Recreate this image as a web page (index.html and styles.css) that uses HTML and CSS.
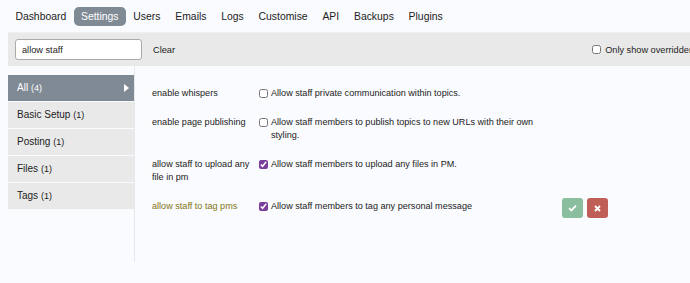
FILE: index.html
```html
<!DOCTYPE html>
<html>
<head>
<meta charset="utf-8">
<link rel="stylesheet" href="styles.css">
</head>
<body>
<div class="page">
  <nav class="nav">
    <a class="nav-item">Dashboard</a>
    <a class="nav-item active">Settings</a>
    <a class="nav-item">Users</a>
    <a class="nav-item">Emails</a>
    <a class="nav-item">Logs</a>
    <a class="nav-item">Customise</a>
    <a class="nav-item">API</a>
    <a class="nav-item">Backups</a>
    <a class="nav-item">Plugins</a>
  </nav>
  <div class="band">
    <input class="search" type="text" value="allow staff">
    <span class="clear">Clear</span>
    <label class="overridden"><input type="checkbox" class="cb"> Only show overridden</label>
  </div>
  <div class="layout">
    <ul class="sidebar">
      <li class="side-item active">All <span class="count">(4)</span><span class="tri"></span></li>
      <li class="side-item">Basic Setup <span class="count">(1)</span></li>
      <li class="side-item">Posting <span class="count">(1)</span></li>
      <li class="side-item">Files <span class="count">(1)</span></li>
      <li class="side-item">Tags <span class="count">(1)</span></li>
    </ul>
    <div class="main">
      <div class="row">
        <div class="label">enable whispers</div>
        <label class="value"><input type="checkbox" class="cb"><span>Allow staff private communication within topics.</span></label>
      </div>
      <div class="row">
        <div class="label">enable page publishing</div>
        <label class="value"><input type="checkbox" class="cb"><span>Allow staff members to publish topics to new URLs with their own styling.</span></label>
      </div>
      <div class="row">
        <div class="label">allow staff to upload any file in pm</div>
        <label class="value"><input type="checkbox" class="cb" checked><span>Allow staff members to upload any files in PM.</span></label>
      </div>
      <div class="row">
        <div class="label dirty">allow staff to tag pms</div>
        <label class="value"><input type="checkbox" class="cb" checked><span>Allow staff members to tag any personal message</span></label>
        <div class="actions">
          <button class="btn ok"><svg width="9" height="8" viewBox="0 0 9 8"><path d="M1 4.2 L3.4 6.4 L8 1.6" fill="none" stroke="#fff" stroke-width="1.8"/></svg></button>
          <button class="btn cancel"><svg width="7" height="7" viewBox="0 0 7 7"><path d="M1 1 L6 6 M6 1 L1 6" fill="none" stroke="#fff" stroke-width="1.8"/></svg></button>
        </div>
      </div>
    </div>
  </div>
</div>
</body>
</html>
```
FILE: styles.css
```css
html, body {
  margin: 0;
  padding: 0;
  background: #fafbfe;
  overflow: hidden;
}
body {
  font-family: "Liberation Sans", Arial, sans-serif;
  color: #222;
}
.page {
  padding-left: 8px;
  width: 730px;
}
.nav {
  display: flex;
  align-items: center;
  height: 33px;
  border-bottom: 1px solid #eef0f3;
  box-sizing: border-box;
}
.nav-item {
  font-size: 10.4px;
  padding: 0 7.4px;
  height: 19px;
  line-height: 19px;
  color: #222;
  border-radius: 5px;
}
.nav-item.active {
  background: #7f8a95;
  color: #fff;
}
.band {
  display: flex;
  align-items: center;
  height: 33px;
  background: #e9e9e9;
  padding: 0 44px 0 7px;
}
.search {
  width: 127px;
  height: 21px;
  box-sizing: border-box;
  border: 1px solid #aaa;
  border-radius: 3px;
  background: #fff;
  font-family: "Liberation Sans", Arial, sans-serif;
  font-size: 9.2px;
  padding: 0 6px;
  margin: 0;
  color: #222;
}
.clear {
  font-size: 9.2px;
  margin-left: 11px;
}
.overridden {
  margin-left: auto;
  font-size: 9.2px;
  display: flex;
  align-items: center;
  gap: 4px;
  white-space: nowrap;
}
.cb {
  width: 9px;
  height: 9px;
  margin: 0;
  accent-color: #7b3d9b;
}
.layout {
  display: flex;
}
.sidebar {
  list-style: none;
  margin: 9px 0 0 0;
  padding: 0;
  width: 126px;
  align-self: flex-start;
}
.side-item {
  height: 26px;
  line-height: 26px;
  background: #e9e9e9;
  border-bottom: 1px solid #fafbfe;
  font-size: 10px;
  padding-left: 9px;
  position: relative;
}
.side-item:last-child {
  border-bottom: 0;
}
.side-item .count {
  font-size: 9px;
}
.side-item.active {
  background: #7f8a95;
  color: #fff;
}
.tri {
  position: absolute;
  right: 5px;
  top: 9px;
  width: 0;
  height: 0;
  border-top: 4.5px solid transparent;
  border-bottom: 4.5px solid transparent;
  border-left: 5px solid #fff;
}
.main {
  border-left: 1px solid #e6e7ea;
  padding: 13px 0 0 17px;
  min-height: 183px;
}
.row {
  display: flex;
  align-items: flex-start;
  padding: 8px 0;
  font-size: 9.1px;
  line-height: 13px;
}
.label {
  width: 100px;
  margin-right: 7px;
}
.label.dirty {
  color: #837513;
}
.value {
  width: 276px;
  display: flex;
  align-items: flex-start;
  gap: 3px;
}
.value .cb {
  margin-top: 2px;
}
.actions {
  display: flex;
  gap: 4px;
  margin-left: 27px;
  margin-top: -2px;
}
.btn {
  width: 21px;
  height: 20px;
  border: 0;
  border-radius: 3px;
  padding: 0;
  display: flex;
  align-items: center;
  justify-content: center;
}
.btn.ok {
  background: #8bbe9e;
}
.btn.cancel {
  background: #c05f58;
}
```
